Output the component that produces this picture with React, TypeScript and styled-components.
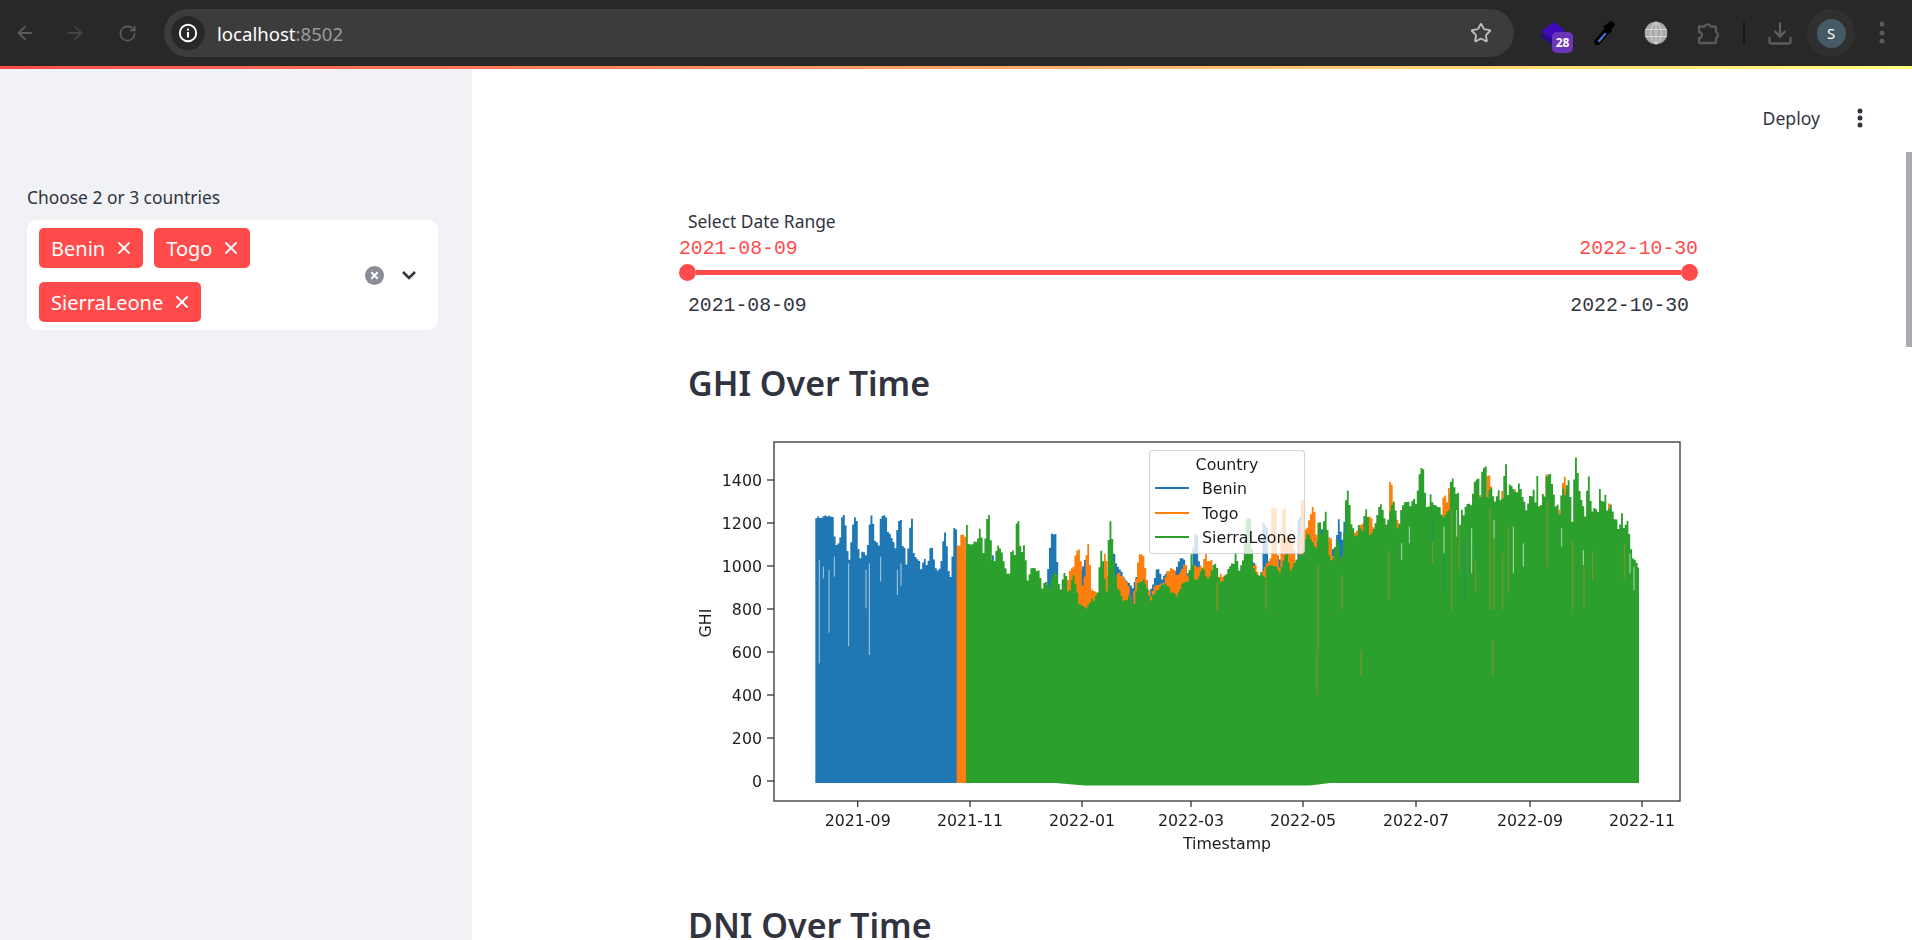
import React from "react";
import styled, { createGlobalStyle } from "styled-components";
import { ArrowLeft, ArrowRight, RotateCw, Star, X } from "lucide-react";

const GlobalStyle = createGlobalStyle`
  html, body { margin: 0; padding: 0; height: 940px; overflow: hidden; background: #fff; }
  body { font-family: "Noto Sans", "Open Sans", sans-serif; color: #31333f; }
`;

type Pt = [number, number];

// points are read off zoomed crops, so they get mapped back to page pixels
const crop = (ox: number, oy: number, pts: Pt[]): Pt[] => pts.map(([x, y]) => [ox + x / 3, oy + y / 3]);

const DAY = 1.84;

const skyline = (raw: Pt[], endX: number, bottom: Pt[], seed: number) => {
  const pts = [...raw].sort((a, b) => a[0] - b[0]);
  const topAt = (x: number) => {
    for (let i = 0; i < pts.length - 1; i++) {
      if (x <= pts[i + 1][0]) {
        const t = (x - pts[i][0]) / (pts[i + 1][0] - pts[i][0] || 1);
        return pts[i][1] + (pts[i + 1][1] - pts[i][1]) * Math.max(0, t);
      }
    }
    return pts[pts.length - 1][1];
  };
  let d = `M${pts[0][0]} ${bottom[0][1]}`;
  let i = 0;
  for (let x = pts[0][0]; x < endX; x += DAY, i++) {
    const next = Math.min(x + DAY, endX);
    const inBin = pts.filter((p) => p[0] >= x && p[0] < next).map((p) => p[1]);
    const noise = Math.sin(i * 12.9898 + seed) * 43758.5453;
    const y = Math.min(topAt(x), topAt(next), ...inBin) + (noise - Math.floor(noise) - 0.5) * 3;
    d += `L${x.toFixed(1)} ${y.toFixed(1)}L${next.toFixed(1)} ${y.toFixed(1)}`;
  }
  [...bottom].reverse().forEach(([x, y]) => {
    d += `L${x} ${y}`;
  });
  return d + "Z";
};

const blueTop: Pt[] = [
  ...crop(690, 430, [
    [376, 268], [385, 262], [397, 262], [405, 256], [415, 262], [421, 260], [430, 262], [434, 440], [440, 345], [445, 342],
    [452, 370], [455, 268], [462, 257], [466, 305], [472, 400], [482, 390], [488, 318], [494, 265], [500, 285], [505, 410],
    [510, 435], [515, 375], [522, 365], [528, 385], [533, 382], [544, 257], [550, 295], [556, 375], [563, 340], [570, 380],
    [575, 260], [585, 257], [590, 315], [597, 310], [605, 330], [612, 335], [618, 430], [626, 272], [632, 270], [636, 420],
    [640, 345], [648, 420], [655, 390], [665, 266], [670, 415], [675, 385], [685, 395], [692, 440], [700, 395], [705, 390],
    [712, 430], [725, 350], [732, 415], [745, 420], [755, 420], [760, 350], [766, 310], [770, 400], [776, 435], [782, 450],
    [788, 465], [792, 298], [797, 300], [800, 400], [905, 500], [908, 380], [914, 500], [1074, 500], [1078, 395], [1088, 310], [1095, 310], [1100, 415],
    [1104, 520], [1170, 520], [1175, 425], [1188, 388], [1195, 520], [1240, 520], [1245, 452], [1262, 450], [1268, 365], [1275, 400], [1300, 440], [1330, 480], [1340, 440],
  ]),
  ...crop(1140, 450, [
    [20, 460], [30, 435], [45, 390], [55, 355], [65, 400], [75, 375], [90, 365], [110, 360], [120, 330], [130, 325], [140, 370],
    [148, 395], [160, 420], [164, 255], [170, 255], [175, 350], [200, 400], [300, 400], [340, 335], [348, 400], [370, 400], [372, 220], [378, 220], [382, 340],
    [415, 315], [425, 400], [474, 400], [478, 197], [484, 197], [488, 400], [520, 300], [548, 235], [556, 300], [590, 300], [597, 212], [605, 330],
    [615, 218], [622, 280], [650, 250], [655, 300], [660, 400], [745, 400], [748, 212], [755, 240],
  ]),
  ...crop(1400, 450, [[0, 330], [40, 300], [50, 500]]),
];

const orangeTop: Pt[] = [
  ...crop(690, 430, [
    [800, 345], [806, 392], [815, 318], [825, 318], [828, 400], [900, 500], [1040, 500], [1050, 483], [1060, 478], [1070, 510],
    [1082, 550], [1088, 495], [1130, 510], [1140, 420], [1152, 420], [1160, 365], [1168, 360], [1175, 480], [1185, 455], [1195, 338],
    [1200, 470], [1215, 490], [1235, 500], [1245, 375], [1253, 450], [1270, 400], [1275, 460], [1285, 430], [1295, 440], [1305, 450],
    [1315, 470], [1322, 520], [1330, 550], [1335, 490], [1345, 410],
  ]),
  ...crop(1140, 450, [
    [0, 315], [8, 315], [15, 370], [30, 455], [45, 410], [60, 400], [75, 395], [85, 365], [100, 355], [105, 380], [125, 365],
    [135, 345], [145, 410], [160, 350], [180, 350], [190, 370], [197, 315], [205, 350], [215, 330], [220, 400], [240, 375],
    [300, 400], [345, 345], [355, 390], [395, 320], [398, 172], [405, 172], [412, 355], [426, 355], [428, 176], [435, 176], [440, 300], [450, 245],
    [460, 300], [465, 370], [480, 400], [484, 150], [491, 150], [495, 300], [505, 230], [520, 172], [528, 280], [535, 320], [570, 262], [575, 320],
    [600, 380], [607, 325], [620, 280], [690, 200], [700, 240], [745, 400], [752, 95], [762, 200], [775, 225],
  ]),
  ...crop(1400, 450, [
    [0, 222], [3, 268], [30, 300], [42, 300], [43, 178], [50, 225], [60, 300], [130, 300], [133, 135], [142, 200], [146, 110], [153, 150], [160, 300], [172, 300], [175, 225], [181, 260],
    [230, 300], [238, 135], [245, 185], [258, 300], [262, 85], [268, 75], [275, 170], [290, 300], [304, 300], [305, 125], [313, 315], [340, 315], [345, 122], [352, 250], [375, 300],
    [380, 202], [388, 268], [415, 300], [420, 165], [426, 250], [435, 300], [438, 72], [445, 150], [470, 300], [478, 178], [485, 235], [488, 300], [492, 77], [500, 150], [510, 300],
    [513, 215], [520, 275], [544, 300], [546, 180], [556, 300], [558, 205], [562, 240], [570, 300], [620, 300], [626, 162], [632, 215], [640, 300], [668, 300], [672, 275], [678, 285], [684, 500],
  ]),
];

const greenTop: Pt[] = [
  ...crop(690, 430, [
    [828, 288], [838, 380], [845, 345], [855, 338], [863, 345], [870, 300], [878, 380], [884, 365], [890, 320], [895, 257], [903, 380],
    [912, 420], [925, 345], [933, 370], [940, 405], [950, 430], [963, 440], [966, 362], [975, 410], [983, 270], [992, 410], [1002, 350], [1010, 470],
    [1025, 415], [1035, 420], [1045, 420], [1055, 490], [1068, 452], [1078, 495], [1090, 435], [1100, 430], [1110, 510], [1125, 425],
    [1135, 515], [1150, 440], [1165, 520], [1190, 540], [1205, 510], [1215, 510], [1228, 480], [1233, 362], [1245, 480], [1255, 480], [1260, 272], [1270, 400],
    [1280, 470], [1300, 520], [1320, 500], [1330, 555], [1345, 460],
  ]),
  ...crop(1140, 450, [
    [0, 395], [10, 392], [20, 420], [30, 460], [40, 440], [50, 425], [60, 420], [70, 400], [80, 405], [90, 425], [100, 430], [110, 450],
    [120, 420], [135, 395], [150, 400], [153, 310], [160, 370], [165, 400], [180, 375], [190, 355], [200, 390], [215, 375], [225, 338],
    [235, 390], [245, 400], [260, 375], [275, 340], [283, 350], [286, 310], [295, 375], [305, 345], [315, 330], [320, 205], [330, 205],
    [335, 340], [345, 370], [355, 380], [365, 370], [375, 400], [385, 345], [395, 350], [410, 355], [420, 370], [440, 310], [450, 370],
    [470, 330], [490, 310], [503, 250], [515, 280], [525, 290], [532, 300], [538, 215], [550, 290], [556, 185], [566, 320], [575, 345],
    [585, 320], [590, 270], [600, 330], [605, 350], [612, 300], [622, 122], [632, 230], [640, 240], [650, 300], [656, 225], [668, 265],
    [678, 175], [688, 260], [700, 250], [712, 210], [722, 165], [730, 200], [740, 240], [752, 190], [762, 155], [772, 260], [780, 230],
  ]),
  ...crop(1400, 450, [
    [0, 230], [7, 170], [14, 165], [17, 160], [25, 155], [28, 225], [35, 155], [42, 150], [47, 225], [52, 130], [58, 112], [63, 58], [70, 60],
    [75, 205], [85, 170], [90, 200], [92, 135], [99, 200], [106, 165], [115, 170], [120, 180], [127, 225], [136, 195], [150, 180], [156, 88],
    [164, 130], [172, 130], [177, 225], [183, 258], [186, 180], [192, 225], [198, 175], [206, 165], [214, 180], [228, 85], [236, 85], [240, 185],
    [250, 50], [258, 52], [262, 215], [272, 115], [281, 155], [290, 170], [295, 120], [303, 175], [312, 140], [317, 47], [325, 230], [328, 105],
    [335, 110], [345, 125], [351, 200], [355, 98], [363, 135], [374, 170], [382, 210], [389, 140], [395, 180], [400, 118], [408, 210], [411, 75],
    [418, 250], [428, 135], [435, 155], [443, 70], [452, 72], [455, 140], [460, 130], [465, 170], [472, 165], [480, 230], [488, 115], [497, 155],
    [505, 92], [513, 210], [520, 250], [527, 25], [535, 120], [540, 140], [550, 180], [560, 240], [565, 78], [573, 210], [582, 178], [590, 185],
    [597, 205], [600, 120], [607, 225], [615, 135], [622, 210], [633, 160], [640, 215], [645, 205], [652, 235], [660, 270], [665, 190], [673, 280],
    [682, 210], [690, 325], [693, 302], [700, 350], [704, 325], [712, 355],
  ]),
];

const blueBase: Pt[] = [[814.7, 783], [1639, 783]];
const orangeBase: Pt[] = [[956, 783], [1639, 783]];
const greenBase: Pt[] = [[965.7, 783], [1055, 783], [1085, 785.5], [1310, 785.5], [1330, 783], [1639, 783]];

// thin lines: [x, y1, y2] in crop pixels
const paleBlue = crop(690, 430, [
  [388, 390], [400, 410], [417, 420], [433, 380], [476, 400], [528, 420], [538, 400], [572, 380], [622, 420], [633, 400],
]).map(([x, y], i) => [x, y, [700, 445, 608, 440, 648, 535, 675, 455, 495, 468][i] / 3 + 430]);

const olive: number[][] = [
  [98, 275, 340], [155, 180, 480], [178, 225, 360], [227, 330, 425], [270, 170, 480], [282, 265, 480], [308, 310, 480],
  [325, 230, 430], [442, 150, 350], [518, 270, 480], [552, 345, 470], [578, 305, 390], [673, 280, 385],
].map(([x, a, b]) => [1400 + x / 3, 450 + a / 3, 450 + b / 3]);

const teal: number[][] = [
  [98, 200, 275], [132, 310, 430], [193, 265, 450], [227, 285, 330],
].map(([x, a, b]) => [1400 + x / 3, 450 + a / 3, 450 + b / 3]);

const oliveFull: number[][] = [
  [1317, 650, 695], [1361, 650, 676], [1493, 640, 676], [1217, 583, 610], [1266, 570, 610], [1318, 565, 650], [1342, 575, 610],
  [1389, 550, 600], [1140 + 232 / 3, 583, 610],
];

const paleGreen: number[][] = [
  [5, 280, 330], [132, 230, 310], [215, 235, 370], [340, 230, 370], [370, 280, 350], [485, 235, 290], [550, 300, 345], [690, 310, 370],
  [702, 350, 420], [282, 210, 265], [170, 180, 260], [28, 230, 280],
].map(([x, a, b]) => [1400 + x / 3, 450 + a / 3, 450 + b / 3]);

const yTicks: [string, number][] = [
  ["1400", 480], ["1200", 523], ["1000", 566], ["800", 609], ["600", 652], ["400", 695], ["200", 738], ["0", 781],
];
const xTicks: [string, number][] = [
  ["2021-09", 857.7], ["2021-11", 970], ["2022-01", 1082], ["2022-03", 1191], ["2022-05", 1303], ["2022-07", 1416], ["2022-09", 1530], ["2022-11", 1642],
];
const legendRows: [string, string, number][] = [
  ["Benin", "#1f77b4", 488], ["Togo", "#ff7f0e", 513], ["SierraLeone", "#2ca02c", 537],
];

const Page = styled.div`
  width: 1912px;
  height: 940px;
  display: flex;
  flex-direction: column;
  overflow: hidden;
  position: relative;
`;

const BrowserBar = styled.div`
  height: 66px;
  flex: none;
  display: flex;
  align-items: center;
  background: #282828;
`;

const IconSlot = styled.div<{ $w?: number }>`
  width: ${({ $w }) => $w ?? 52}px;
  height: 48px;
  flex: none;
  display: flex;
  align-items: center;
  justify-content: center;
  position: relative;
`;

const Omnibox = styled.div`
  width: 1350px;
  height: 48px;
  margin: 0 12px 0 10px;
  padding: 0 22px 0 7px;
  box-sizing: border-box;
  flex: none;
  display: flex;
  align-items: center;
  border-radius: 24px;
  background: #3c3c3c;
`;

const InfoChip = styled.div`
  width: 34px;
  height: 34px;
  flex: none;
  display: flex;
  align-items: center;
  justify-content: center;
  border-radius: 50%;
  background: #282828;
`;

const Url = styled.div`
  margin-left: 12px;
  font-size: 18.6px;
  color: #fff;
  flex: 1;
  span { color: #9b9b9b; }
`;

const Badge = styled.div`
  position: absolute;
  left: 26px;
  top: 23px;
  width: 21px;
  height: 21px;
  border-radius: 5px;
  background: #6a35b8;
  color: #fff;
  font-size: 12px;
  font-weight: 700;
  line-height: 21px;
  text-align: center;
`;

const Divider = styled.div`
  width: 2px;
  height: 22px;
  background: #171717;
`;

const AvatarRing = styled.div`
  width: 48px;
  height: 48px;
  border-radius: 50%;
  background: #303030;
  display: flex;
  align-items: center;
  justify-content: center;
`;

const Avatar = styled.div`
  width: 29px;
  height: 29px;
  border-radius: 50%;
  background: #455a64;
  color: #fff;
  font-size: 15px;
  line-height: 29px;
  text-align: center;
`;

const Stripe = styled.div`
  height: 3px;
  flex: none;
  background: linear-gradient(90deg, #ff4b4b, #fffd80);
`;

const Body = styled.div`
  flex: 1;
  display: flex;
  min-height: 0;
`;

const Sidebar = styled.aside`
  width: 472px;
  flex: none;
  padding: 116px 34px 0 27px;
  box-sizing: border-box;
  background: #f0f2f6;
`;

const FieldLabel = styled.div`
  font-size: 17.4px;
  line-height: 24px;
  color: #31333f;
`;

const SelectBox = styled.div`
  margin-top: 11px;
  padding: 8px 21px 8px 12px;
  display: flex;
  align-items: center;
  border-radius: 10px;
  background: #fff;
`;

const TagList = styled.div`
  width: 320px;
  flex: none;
  display: flex;
  flex-wrap: wrap;
  gap: 14px 11px;
`;

const Tag = styled.div`
  height: 40px;
  padding: 0 9px 0 12px;
  display: flex;
  align-items: center;
  gap: 9px;
  border-radius: 5px;
  background: #ff4b4b;
  color: #fff;
  font-size: 20px;
`;

const SelectIcons = styled.div`
  flex: 1;
  display: flex;
  align-items: center;
  justify-content: flex-end;
  gap: 17px;
`;

const Main = styled.main`
  flex: 1;
  min-width: 0;
`;

const Header = styled.header`
  height: 98px;
  padding-right: 49px;
  display: flex;
  align-items: center;
  justify-content: flex-end;
  gap: 37px;
`;

const Deploy = styled.div`
  font-size: 17.6px;
  color: #31333f;
`;

const Content = styled.div`
  width: 1001px;
  margin-left: 216px;
  padding-top: 42px;
`;

const SliderValues = styled.div<{ $red?: boolean; $top: number }>`
  margin: ${({ $top }) => $top}px ${({ $red }) => ($red ? "-9px 0 -9px" : "0 0 0")};
  display: flex;
  justify-content: space-between;
  font-family: "Liberation Mono", monospace;
  font-size: 19.8px;
  line-height: 24px;
  color: ${({ $red }) => ($red ? "#ff4b4b" : "#31333f")};
`;

const Track = styled.div`
  margin: 3px -9px 0 -9px;
  height: 17px;
  display: flex;
  align-items: center;
`;

const Thumb = styled.div`
  width: 17px;
  height: 17px;
  flex: none;
  border-radius: 50%;
  background: #ff4b4b;
`;

const TrackFill = styled.div`
  flex: 1;
  height: 5px;
  background: #ff4b4b;
`;

const Heading = styled.h2<{ $top: number }>`
  margin: ${({ $top }) => $top}px 0 0;
  font-size: 34px;
  font-weight: 600;
  line-height: 50px;
  color: #31333f;
`;

const ChartFrame = styled.svg`
  display: block;
  margin-top: 22px;
  overflow: visible;
  filter: blur(0.4px);
`;

const ChartText = styled.text`
  font-family: "DejaVu Sans", sans-serif;
  font-size: 15.8px;
  fill: #1c1c1c;
`;

const ScrollThumb = styled.div`
  position: absolute;
  right: 0;
  top: 152px;
  width: 6px;
  height: 195px;
  background: #a9a9ae;
`;

const Chart = () => (
  <ChartFrame width={1008} height={425} viewBox="688 430 1008 425">
    <path d={skyline(blueTop, 1639, blueBase, 1)} fill="#1f77b4" />
    {paleBlue.map(([x, a, b], i) => (
      <line key={i} x1={x} x2={x} y1={a} y2={b} stroke="#a9cbe2" strokeWidth={1} />
    ))}
    <path d={skyline(orangeTop, 1639, orangeBase, 2)} fill="#ff7f0e" />
    <path d={skyline(greenTop, 1639, greenBase, 3)} fill="#2ca02c" />
    {olive.concat(oliveFull).map(([x, a, b], i) => (
      <line key={i} x1={x} x2={x} y1={a} y2={b} stroke="#8f8f28" strokeWidth={1} />
    ))}
    {teal.map(([x, a, b], i) => (
      <line key={i} x1={x} x2={x} y1={a} y2={b} stroke="#2b8a75" strokeWidth={1} />
    ))}
    {paleGreen.map(([x, a, b], i) => (
      <line key={i} x1={x} x2={x} y1={a} y2={b} stroke="#b5d9b5" strokeWidth={1} />
    ))}
    <rect x={774} y={442} width={906} height={359} fill="none" stroke="#333" strokeWidth={1.3} />
    {yTicks.map(([label, y]) => (
      <g key={label}>
        <line x1={767} x2={774} y1={y} y2={y} stroke="#333" strokeWidth={1.3} />
        <ChartText x={762} y={y + 6} textAnchor="end">{label}</ChartText>
      </g>
    ))}
    {xTicks.map(([label, x]) => (
      <g key={label}>
        <line x1={x} x2={x} y1={801} y2={807} stroke="#333" strokeWidth={1.3} />
        <ChartText x={x} y={826} textAnchor="middle">{label}</ChartText>
      </g>
    ))}
    <ChartText x={1227} y={849} textAnchor="middle">Timestamp</ChartText>
    <ChartText x={711} y={623} textAnchor="middle" transform="rotate(-90 711 623)">GHI</ChartText>
    <rect x={1149.5} y={450.5} width={155} height={103} rx={3.5} fill="#fff" fillOpacity={0.8} stroke="#ccc" strokeOpacity={0.8} strokeWidth={1.2} />
    <ChartText x={1227} y={470} textAnchor="middle">Country</ChartText>
    {legendRows.map(([label, color, y]) => (
      <g key={label}>
        <line x1={1155} x2={1189} y1={y} y2={y} stroke={color} strokeWidth={2.2} />
        <ChartText x={1202} y={y + 6}>{label}</ChartText>
      </g>
    ))}
  </ChartFrame>
);

const TagItem = ({ label }: { label: string }) => (
  <Tag>
    {label}
    <X size={20} strokeWidth={2.2} color="#fff" />
  </Tag>
);

export default function App() {
  return (
    <Page>
      <GlobalStyle />
      <BrowserBar>
        <IconSlot $w={50}><ArrowLeft size={22} color="#5b5b5b" strokeWidth={2} /></IconSlot>
        <IconSlot $w={50}><ArrowRight size={22} color="#444" strokeWidth={2} /></IconSlot>
        <IconSlot $w={54}><RotateCw size={19} color="#5e5e5e" strokeWidth={2} /></IconSlot>
        <Omnibox>
          <InfoChip>
            <svg width="20" height="20" viewBox="0 0 20 20">
              <circle cx="10" cy="10" r="8.2" fill="none" stroke="#fff" strokeWidth="1.9" />
              <rect x="9" y="9" width="2" height="5.5" fill="#fff" />
              <rect x="9" y="5.6" width="2" height="2" fill="#fff" />
            </svg>
          </InfoChip>
          <Url>localhost<span>:8502</span></Url>
          <Star size={22} color="#c0c0c0" strokeWidth={2} />
        </Omnibox>
        <IconSlot>
          <svg width="26" height="26" viewBox="0 0 26 26">
            <path d="M2 17 2 13 13 18 24 13 13 25z" fill="#2a0a8c" />
            <path d="M2 11 15 2 26 10 13 19z" fill="#3f0bb8" />
          </svg>
          <Badge>28</Badge>
        </IconSlot>
        <IconSlot>
          <svg width="24" height="26" viewBox="0 0 24 26">
            <path d="M2 21 13 8l5 4.5L7 25H3z" fill="#000" />
            <path d="M5.5 21 13 12.5l1.5 1.3L7.5 22.5z" fill="#4a6fd8" />
            <path d="M14 5l4-3.5 1.5-.5 3 2.5 0 2-3.500 4.500 1 1.500-2 1.500-7-6 1.500-2z" fill="#000" />
          </svg>
        </IconSlot>
        <IconSlot>
          <svg width="24" height="24" viewBox="0 0 24 24">
            <circle cx="12" cy="12" r="11.3" fill="#a9a9a9" />
            <path d="M1 8.5h22M1 15.5h22M12 .7v22.6M12 .7C5 6 5 18 12 23.3M12 .7C19 6 19 18 12 23.3" fill="none" stroke="#d8d8d8" strokeWidth="1" />
          </svg>
        </IconSlot>
        <IconSlot>
          <svg width="24" height="24" viewBox="0 0 24 24">
            <path d="M3 5.500h5.500a3.200 3.200 0 0 1 6 0H19a1 1 0 0 1 1 1V11a3.200 3.200 0 0 1 0 6v4a1 1 0 0 1-1 1H4a1 1 0 0 1-1-1v-4a3 3 0 0 0 0-6z" fill="none" stroke="#5a5a5a" strokeWidth="2.300" strokeLinejoin="round" />
          </svg>
        </IconSlot>
        <IconSlot $w={20}><Divider /></IconSlot>
        <IconSlot>
          <svg width="24" height="24" viewBox="0 0 24 24">
            <path d="M12 1.500V15M6.500 10l5.500 5.500 5.500-5.500M1.500 16v4.500a2 2 0 0 0 2 2h17a2 2 0 0 0 2-2V16" fill="none" stroke="#5e5e5e" strokeWidth="2.300" />
          </svg>
        </IconSlot>
        <IconSlot $w={50}>
          <AvatarRing><Avatar>S</Avatar></AvatarRing>
        </IconSlot>
        <IconSlot>
          <svg width="6" height="24" viewBox="0 0 6 24">
            <circle cx="3" cy="3" r="2.500" fill="#5a5a5a" />
            <circle cx="3" cy="12" r="2.500" fill="#5a5a5a" />
            <circle cx="3" cy="20" r="2.500" fill="#5a5a5a" />
          </svg>
        </IconSlot>
      </BrowserBar>
      <Stripe />
      <Body>
        <Sidebar>
          <FieldLabel>Choose 2 or 3 countries</FieldLabel>
          <SelectBox>
            <TagList>
              <TagItem label="Benin" />
              <TagItem label="Togo" />
              <TagItem label="SierraLeone" />
            </TagList>
            <SelectIcons>
              <svg width="19" height="19" viewBox="0 0 19 19">
                <circle cx="9.500" cy="9.500" r="9.500" fill="#8a8c98" />
                <path d="M6.300 6.300l6.400 6.400M12.700 6.300l-6.400 6.400" stroke="#fff" strokeWidth="2" />
              </svg>
              <svg width="16" height="10" viewBox="0 0 16 10">
                <path d="M2 2l6 6 6-6" fill="none" stroke="#31333f" strokeWidth="2.600" />
              </svg>
            </SelectIcons>
          </SelectBox>
        </Sidebar>
        <Main>
          <Header>
            <Deploy>Deploy</Deploy>
            <svg width="6" height="20" viewBox="0 0 6 20">
              <circle cx="3" cy="3" r="2.500" fill="#31333f" />
              <circle cx="3" cy="10" r="2.500" fill="#31333f" />
              <circle cx="3" cy="17" r="2.500" fill="#31333f" />
            </svg>
          </Header>
          <Content>
            <FieldLabel>Select Date Range</FieldLabel>
            <SliderValues $red $top={4}>
              <span>2021-08-09</span>
              <span>2022-10-30</span>
            </SliderValues>
            <Track>
              <Thumb />
              <TrackFill />
              <Thumb />
            </Track>
            <SliderValues $top={13}>
              <span>2021-08-09</span>
              <span>2022-10-30</span>
            </SliderValues>
            <Heading $top={40}>GHI Over Time</Heading>
            <Chart />
            <Heading $top={45}>DNI Over Time</Heading>
          </Content>
        </Main>
      </Body>
      <ScrollThumb />
    </Page>
  );
}
